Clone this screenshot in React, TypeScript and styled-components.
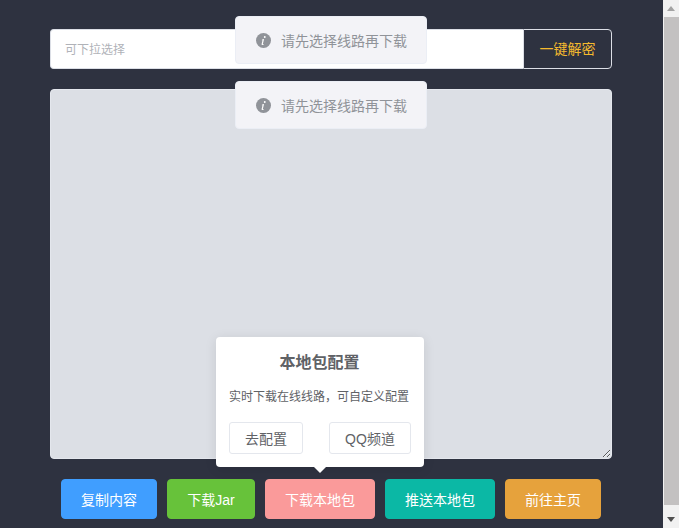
import React from "react";
import styled, { createGlobalStyle } from "styled-components";

const Global = createGlobalStyle`
  html, body { margin: 0; padding: 0; height: 100%; overflow: hidden; background: #2e3240; }
  body { font-family: "Liberation Sans", "Noto Sans CJK SC", sans-serif; }
  #root { height: 100%; }
  * { box-sizing: border-box; }
`;

const Page = styled.div`
  display: flex;
  width: 679px;
  height: 528px;
  position: relative;
  overflow: hidden;
`;

const Main = styled.main`
  width: 663px;
  padding: 29px 51px 0 50px;
  display: flex;
  flex-direction: column;
  gap: 20px;
`;

const Track = styled.div`
  width: 16px;
  height: 528px;
  background: #f1f1f1;
  display: flex;
  flex-direction: column;
  align-items: center;
`;

const ArrowBox = styled.div`
  height: 17px;
  width: 100%;
  display: flex;
  align-items: center;
  justify-content: center;
`;

const Thumb = styled.div`
  flex: 1;
  width: 15px;
  margin: 0 0 6px 1px;
  background: #c3c1c1;
`;

const InputRow = styled.div`
  display: flex;
  height: 40px;
  width: 562px;
`;

const TextInput = styled.input`
  flex: 1;
  min-width: 0;
  height: 40px;
  border: 1px solid #dcdfe6;
  border-right: 0;
  border-radius: 4px 0 0 4px;
  background: #fff;
  padding: 2px 14px 0;
  font: 12px "Liberation Sans", "Noto Sans CJK SC", sans-serif;
  &::placeholder { color: #b0b2b8; opacity: 1; }
`;

const Append = styled.button`
  width: 89px;
  height: 40px;
  background: #2e3240;
  border: 1px solid #dcdfe6;
  border-radius: 0 4px 4px 0;
  color: #f5ba2e;
  font: 14px "Liberation Sans", "Noto Sans CJK SC", sans-serif;
  padding: 0 0 2px;
`;

const TextArea = styled.textarea`
  display: block;
  width: 562px;
  height: 370px;
  border: 1px solid #e4e7ed;
  border-radius: 4px;
  background: #dcdfe5;
  padding: 5px 15px;
  font: 14px "Liberation Sans", "Noto Sans CJK SC", sans-serif;
  resize: vertical;
`;

const Actions = styled.div`
  display: flex;
  justify-content: center;
  gap: 10px;
  width: 562px;
`;

const Action = styled.button<{ $bg: string; $w: number }>`
  width: ${(p) => p.$w}px;
  height: 40px;
  border: 1px solid ${(p) => p.$bg};
  border-radius: 4px;
  background: ${(p) => p.$bg};
  color: #fff;
  font: 14px "Liberation Sans", "Noto Sans CJK SC", sans-serif;
  padding: 0;
`;

const Toast = styled.div<{ $top: number }>`
  position: absolute;
  top: ${(p) => p.$top}px;
  left: 235px;
  width: 192px;
  height: 48px;
  display: flex;
  align-items: center;
  gap: 10px;
  padding-left: 20px;
  background: #f3f3f7;
  border: 1px solid #ebeef5;
  border-radius: 4px;
  color: #909399;
  font-size: 14px;
  white-space: nowrap;
`;

const Popover = styled.div`
  position: absolute;
  left: 216px;
  top: 337px;
  width: 208px;
  height: 130px;
  background: #fff;
  border-radius: 4px;
  padding: 17px 13px 0 12px;
  box-shadow: 0 2px 12px rgba(0, 0, 0, 0.1);
  display: flex;
  flex-direction: column;
  color: #606266;
  &::after {
    content: "";
    position: absolute;
    left: 98px;
    top: 130px;
    border: 6px solid transparent;
    border-bottom: 0;
    border-top-color: #fff;
  }
`;

const PopTitle = styled.div`
  font-size: 16px;
  line-height: 18px;
  font-weight: 700;
  text-align: center;
  color: #606266;
`;

const PopText = styled.div`
  margin: 17px 0 0 -1px;
  font-size: 12px;
  line-height: 17px;
  text-align: center;
  white-space: nowrap;
`;

const PopActions = styled.div`
  display: flex;
  justify-content: space-between;
  margin-top: 16px;
  padding-left: 1px;
`;

const PopButton = styled.button<{ $w: number }>`
  width: ${(p) => p.$w}px;
  height: 32px;
  background: #fff;
  border: 1px solid #e4e7ed;
  border-radius: 3px;
  color: #606266;
  font: 14px "Liberation Sans", "Noto Sans CJK SC", sans-serif;
  padding: 0;
`;

const InfoIcon = () => (
  <svg width="15" height="15" viewBox="0 0 16 16" aria-hidden="true">
    <circle cx="8" cy="8" r="8" fill="#909399" />
    <path d="M9.4 3.2a1 1 0 1 1-.1 2 1 1 0 0 1 .1-2ZM8.6 6.4l-1.3 5.2c-.1.4.3.5.9.2l-.1.6c-1 .6-2.4.5-2.1-.8l.9-3.5c.1-.4-.3-.5-.7-.4l.1-.6c.7-.3 1.5-.5 2.3-.7Z" fill="#fff" />
  </svg>
);

const ActionList: [string, string, number][] = [
  ["复制内容", "#409eff", 96],
  ["下载Jar", "#67c23a", 88],
  ["下载本地包", "#fa9a9a", 110],
  ["推送本地包", "#0bb8a5", 110],
  ["前往主页", "#e6a23c", 96],
];

export default function App() {
  return (
    <Page>
      <Global />
      <Main>
        <InputRow>
          <TextInput placeholder="可下拉选择" />
          <Append>一键解密</Append>
        </InputRow>
        <TextArea />
        <Actions>
          {ActionList.map(([label, bg, w]) => (
            <Action key={label} $bg={bg} $w={w}>
              {label}
            </Action>
          ))}
        </Actions>
      </Main>
      <Track>
        <ArrowBox>
          <svg width="8" height="5" viewBox="0 0 8 5"><path d="M4 0 8 5H0Z" fill="#a3a3a3" /></svg>
        </ArrowBox>
        <Thumb />
        <ArrowBox>
          <svg width="8" height="5" viewBox="0 0 8 5"><path d="M0 0H8L4 5Z" fill="#505050" /></svg>
        </ArrowBox>
      </Track>
      <Toast $top={16}>
        <InfoIcon />
        请先选择线路再下载
      </Toast>
      <Toast $top={81}>
        <InfoIcon />
        请先选择线路再下载
      </Toast>
      <Popover>
        <PopTitle>本地包配置</PopTitle>
        <PopText>实时下载在线线路，可自定义配置</PopText>
        <PopActions>
          <PopButton $w={74}>去配置</PopButton>
          <PopButton $w={82}>QQ频道</PopButton>
        </PopActions>
      </Popover>
    </Page>
  );
}
